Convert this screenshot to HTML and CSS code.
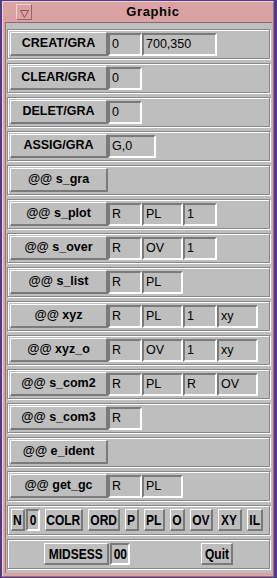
FILE: index.html
```html
<!DOCTYPE html>
<html lang="en">
<head>
  <meta charset="UTF-8">
  <title>Graphic</title>
  <link rel="stylesheet" href="styles.css">
</head>
<body>

  <div class="window">
    <div class="titlebar">
      <span class="menu-btn">
        <svg width="9" height="8" viewBox="0 0 9 8"><path d="M0.5 0.5 H8.5 L4.5 7.5 Z" fill="none" stroke="#8e4f57" stroke-width="1"/></svg>
      </span>
      <span class="title">Graphic</span>
    </div>

    <div class="panel">

      <div class="row">
        <button class="cmd">CREAT/GRA</button>
        <span class="field f-s">0</span>
        <span class="field f-xl">700,350</span>
      </div>

      <div class="row">
        <button class="cmd">CLEAR/GRA</button>
        <span class="field f-s">0</span>
      </div>

      <div class="row">
        <button class="cmd">DELET/GRA</button>
        <span class="field f-s">0</span>
      </div>

      <div class="row">
        <button class="cmd">ASSIG/GRA</button>
        <span class="field f-l">G,0</span>
      </div>

      <div class="row">
        <button class="cmd">@@ s_gra</button>
      </div>

      <div class="row">
        <button class="cmd">@@ s_plot</button>
        <span class="field f-s">R</span>
        <span class="field f-m">PL</span>
        <span class="field f-s">1</span>
      </div>

      <div class="row">
        <button class="cmd">@@ s_over</button>
        <span class="field f-s">R</span>
        <span class="field f-m">OV</span>
        <span class="field f-s">1</span>
      </div>

      <div class="row">
        <button class="cmd">@@ s_list</button>
        <span class="field f-s">R</span>
        <span class="field f-m">PL</span>
      </div>

      <div class="row">
        <button class="cmd">@@ xyz</button>
        <span class="field f-s">R</span>
        <span class="field f-m">PL</span>
        <span class="field f-s">1</span>
        <span class="field f-m">xy</span>
      </div>

      <div class="row">
        <button class="cmd">@@ xyz_o</button>
        <span class="field f-s">R</span>
        <span class="field f-m">OV</span>
        <span class="field f-s">1</span>
        <span class="field f-m">xy</span>
      </div>

      <div class="row">
        <button class="cmd">@@ s_com2</button>
        <span class="field f-s">R</span>
        <span class="field f-m">PL</span>
        <span class="field f-s">R</span>
        <span class="field f-m">OV</span>
      </div>

      <div class="row">
        <button class="cmd">@@ s_com3</button>
        <span class="field f-s">R</span>
      </div>

      <div class="row">
        <button class="cmd">@@ e_ident</button>
      </div>

      <div class="row">
        <button class="cmd">@@ get_gc</button>
        <span class="field f-s">R</span>
        <span class="field f-m">PL</span>
      </div>

      <div class="row tools">
        <span class="pair">
          <button class="tool w14"><span>N</span></button>
          <span class="field small w14"><span>0</span></span>
        </span>
        <button class="tool w38"><span>COLR</span></button>
        <button class="tool w32"><span>ORD</span></button>
        <button class="tool w14"><span>P</span></button>
        <button class="tool w21"><span>PL</span></button>
        <button class="tool w15"><span>O</span></button>
        <button class="tool w23"><span>OV</span></button>
        <button class="tool w24"><span>XY</span></button>
        <button class="tool w16"><span>IL</span></button>
      </div>

      <div class="row session">
        <span class="pair">
          <button class="tool w65"><span>MIDSESS</span></button>
          <span class="field small w20"><span>00</span></span>
        </span>
        <button class="tool w32"><span>Quit</span></button>
      </div>

    </div>
  </div>

</body>
</html>
```

FILE: styles.css
```css
* {
  box-sizing: border-box;
}

body {
  margin: 0;
  background: #4b3c8e;
  font-family: "Liberation Sans", Arial, sans-serif;
}

.window {
  margin: 1px 3px 1px 2px;
  height: 576px;
  background: #d9a3a3;
  border: 1px solid #f3cfcf;
  border-right-color: #a46c6c;
  border-bottom-color: #a46c6c;
  padding: 0 1px 6px 2px;
  display: flex;
  flex-direction: column;
}

.titlebar {
  height: 20px;
  display: flex;
  align-items: flex-start;
  padding-left: 11px;
}

.menu-btn {
  width: 16px;
  height: 16px;
  margin-top: 2px;
  border: 1px solid #f3cfcf;
  border-right-color: #9c6464;
  border-bottom-color: #9c6464;
  display: flex;
  justify-content: center;
  padding-top: 5px;
}

.menu-btn svg {
  display: block;
}

.title {
  flex: 1;
  text-align: center;
  font-weight: bold;
  font-size: 13px;
  letter-spacing: 0.6px;
  line-height: 20px;
  padding-left: 2px;
  color: #000;
}

.panel {
  flex: 1;
  background: #bebebe;
  border-top: 1px solid #8e6a6a;
  border-left: 1px solid #a06e6e;
  padding: 6px 2px 0 1px;
}

.row {
  height: 30px;
  margin-bottom: 4px;
  border: 1px solid #898989;
  box-shadow: inset 1px 1px 0 #fff, 1px 1px 0 #fff;
  padding: 2px 2px;
  display: flex;
  align-items: flex-end;
}

.cmd {
  width: 98px;
  height: 24px;
  padding: 0 0 1px;
  background: #bebebe;
  border-style: solid;
  border-width: 1px 2px 2px 1px;
  border-color: #fff #7a7a7a #7a7a7a #fff;
  font-family: "Liberation Sans", Arial, sans-serif;
  font-weight: bold;
  font-size: 12.5px;
  color: #000;
  text-align: center;
}

.field {
  height: 23px;
  border-style: solid;
  border-width: 2px;
  border-color: #7a7a7a #fff #fff #7a7a7a;
  padding-left: 2px;
  font-size: 12.5px;
  line-height: 19px;
  color: #000;
}

.f-s { width: 34px; }
.f-m { width: 41px; }
.f-l { width: 48px; }
.f-xl { width: 75px; }

.tools {
  align-items: center;
  padding: 0 0 0 3px;
  gap: 5px;
}

.pair {
  display: flex;
  align-items: center;
  gap: 1px;
}

.tool,
.field.small {
  height: 22px;
  padding: 0;
  display: flex;
  align-items: center;
  justify-content: center;
  font-family: "Liberation Sans", Arial, sans-serif;
  font-weight: bold;
  font-size: 15px;
  color: #000;
  overflow: visible;
}

.tool {
  background: #bebebe;
  border-style: solid;
  border-width: 1px 2px 2px 1px;
  border-color: #fff #7a7a7a #7a7a7a #fff;
}

.tool span,
.field.small span {
  display: inline-block;
  transform: scaleX(0.8);
  white-space: nowrap;
  line-height: 16px;
}

.w14 { width: 14px; }
.w15 { width: 15px; }
.w16 { width: 16px; }
.w20 { width: 20px; }
.w21 { width: 21px; }
.w23 { width: 23px; }
.w24 { width: 24px; }
.w32 { width: 32px; }
.w38 { width: 38px; }
.w65 { width: 65px; }

.session {
  align-items: center;
  justify-content: space-between;
  padding: 0 36px;
}
```
